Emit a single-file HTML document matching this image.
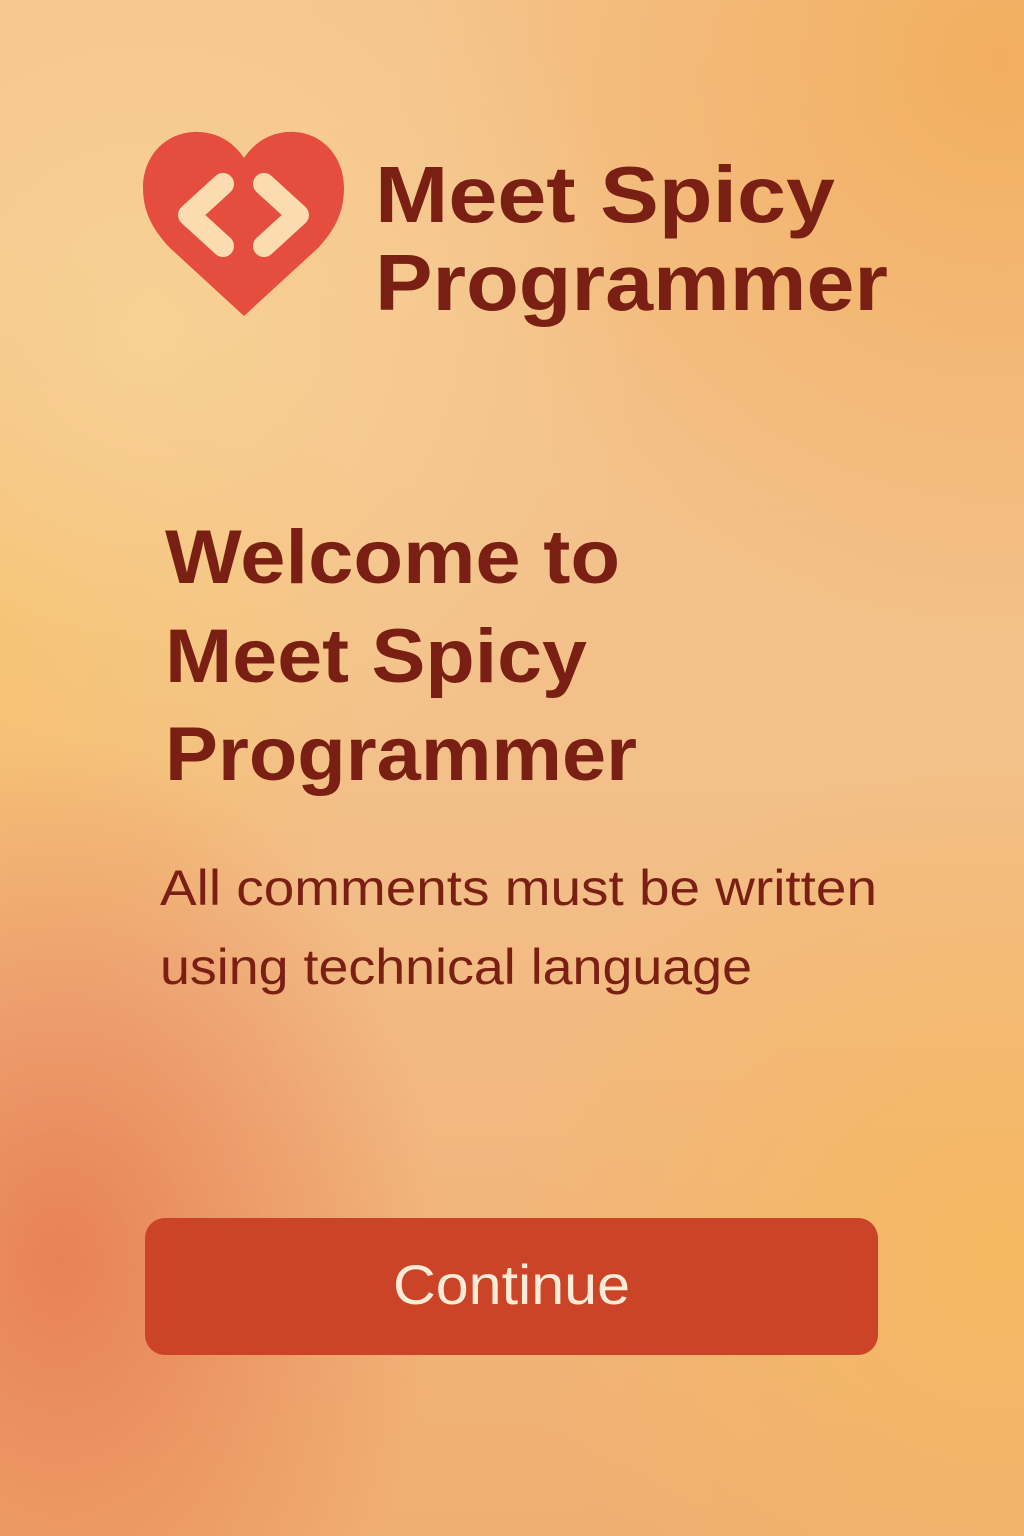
<!DOCTYPE html>
<html><head><meta charset="utf-8"><style>
html,body{margin:0;padding:0;}
body{width:1024px;height:1536px;overflow:hidden;
background:
radial-gradient(ellipse 380px 520px at 60px 1260px, rgba(230,120,80,0.85), rgba(230,120,80,0) 100%),
radial-gradient(ellipse 500px 500px at 150px 330px, rgba(248,210,150,0.9), rgba(248,210,150,0) 100%),
radial-gradient(ellipse 600px 600px at 1000px 60px, rgba(242,172,90,0.9), rgba(242,172,90,0) 100%),
radial-gradient(ellipse 400px 400px at 0px 620px, rgba(245,190,100,0.9), rgba(245,190,100,0) 100%),
radial-gradient(ellipse 500px 500px at 1000px 1250px, rgba(245,185,95,0.9), rgba(245,185,95,0) 100%),
linear-gradient(180deg,#f4c48e 0%,#f3c08a 50%,#f0ae72 100%);}
svg{position:absolute;left:0;top:0;}
</style></head><body>
<svg width="1024" height="1536" viewBox="0 0 1024 1536">
<path d="M244,158 C230,137 210,131 193,132 C163,134 143,158 143,188 C143,214 155,232 170,248 L244,316 L318,248 C333,232 344,214 344,188 C344,158 324,134 295,132 C278,131 258,137 244,158 Z" fill="#e54d3e"/>
<path d="M223,184 L189,215 L223,246 M264,184 L298,215 L264,246" fill="none" stroke="#fbdcb0" stroke-width="22" stroke-linecap="round" stroke-linejoin="round"/>
<g font-family="Liberation Sans, sans-serif" font-weight="bold" fill="#7a1f14">
<text x="375" y="222" font-size="80" textLength="460" lengthAdjust="spacingAndGlyphs">Meet Spicy</text>
<text x="375" y="310" font-size="80" textLength="513" lengthAdjust="spacingAndGlyphs">Programmer</text>
<text x="165" y="583" font-size="76" textLength="455" lengthAdjust="spacingAndGlyphs">Welcome to</text>
<text x="165" y="682" font-size="76" textLength="422" lengthAdjust="spacingAndGlyphs">Meet Spicy</text>
<text x="165" y="780" font-size="76" textLength="472" lengthAdjust="spacingAndGlyphs">Programmer</text>
</g>
<g font-family="Liberation Sans, sans-serif" fill="#7a1f14">
<text x="160" y="905" font-size="50" textLength="717" lengthAdjust="spacingAndGlyphs">All comments must be written</text>
<text x="160" y="984" font-size="50" textLength="592" lengthAdjust="spacingAndGlyphs">using technical language</text>
</g>
<rect x="145" y="1218" width="733" height="137" rx="20" fill="#cc4428"/>
<text x="393" y="1304" font-family="Liberation Sans, sans-serif" font-size="56" fill="#fcebd6" textLength="237" lengthAdjust="spacingAndGlyphs">Continue</text>
</svg>
</body></html>
